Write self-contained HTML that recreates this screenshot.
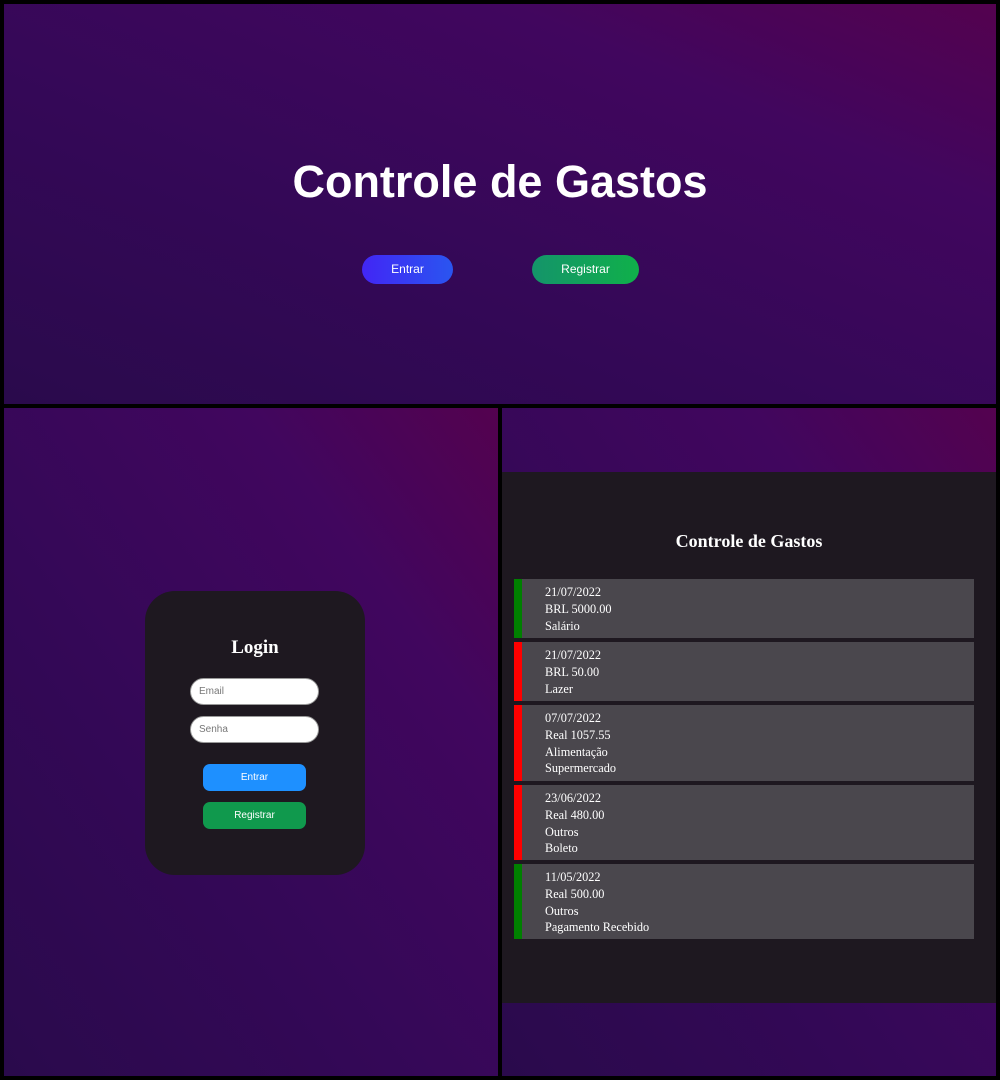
<!DOCTYPE html>
<html><head><meta charset="utf-8"><style>
*{margin:0;padding:0;box-sizing:border-box}
body{width:1000px;height:1080px;background:#000;position:relative;overflow:hidden;font-family:"Liberation Sans",sans-serif}
.p{position:absolute;background:linear-gradient(to top right,#2a0a4c 0%,#340857 40%,#41065e 75%,#54024f 100%)}
#top{left:4px;top:4px;width:992px;height:400px}
#bl{left:4px;top:408px;width:494px;height:668px}
#br{left:502px;top:408px;width:494px;height:668px}
h1.big{position:absolute;left:0;width:992px;top:152px;text-align:center;color:#fff;font-size:45px;font-weight:bold}
.pill{position:absolute;height:29px;border-radius:15px;color:#fff;font-size:12px;line-height:29px;text-align:center}
.card{position:absolute;left:141px;top:183px;width:220px;height:284px;background:#1e1820;border-radius:30px}
.card h2{position:absolute;top:46px;width:100%;text-align:center;color:#fff;font-family:"Liberation Serif",serif;font-size:19px}
.in{position:absolute;left:45px;width:129px;height:27px;background:#fff;border-radius:14px;border:1px solid #999;font-size:10px;color:#777;padding-left:8px;line-height:26px}
.btn{position:absolute;left:58px;width:103px;height:27px;border-radius:7px;color:#fff;font-size:10px;line-height:27px;text-align:center}
.dark{position:absolute;left:0;top:64px;width:494px;height:531px;background:#1e1820}
.dark h2{position:absolute;top:59px;width:100%;text-align:center;color:#fff;font-family:"Liberation Serif",serif;font-size:18px}
.it{position:absolute;left:12px;width:460px;background:#4a474d;border-left:8px solid #008000;padding:5px 0 0 23px;font-family:"Liberation Serif",serif;font-size:12.3px;line-height:16.8px;color:#fff}
.r{border-left-color:#f00}
</style></head><body>
<div class="p" id="top">
<h1 class="big">Controle de Gastos</h1>
<div class="pill" style="left:358px;top:251px;width:91px;background:linear-gradient(90deg,#4226f5,#2a55f0)">Entrar</div>
<div class="pill" style="left:528px;top:251px;width:107px;background:linear-gradient(90deg,#14946a,#10b04a)">Registrar</div>
</div>
<div class="p" id="bl">
<div class="card"><h2>Login</h2>
<div class="in" style="top:87px">Email</div>
<div class="in" style="top:125px">Senha</div>
<div class="btn" style="top:173px;background:#1e90ff">Entrar</div>
<div class="btn" style="top:211px;background:#10994d">Registrar</div>
</div></div>
<div class="p" id="br">
<div class="dark"><h2>Controle de Gastos</h2>
<div class="it" style="top:107px;height:59px">21/07/2022<br>BRL 5000.00<br>Salário</div>
<div class="it r" style="top:170px;height:59px">21/07/2022<br>BRL 50.00<br>Lazer</div>
<div class="it r" style="top:233px;height:76px">07/07/2022<br>Real 1057.55<br>Alimentação<br>Supermercado</div>
<div class="it r" style="top:313px;height:75px">23/06/2022<br>Real 480.00<br>Outros<br>Boleto</div>
<div class="it" style="top:392px;height:75px">11/05/2022<br>Real 500.00<br>Outros<br>Pagamento Recebido</div>
</div></div>
</body></html>
